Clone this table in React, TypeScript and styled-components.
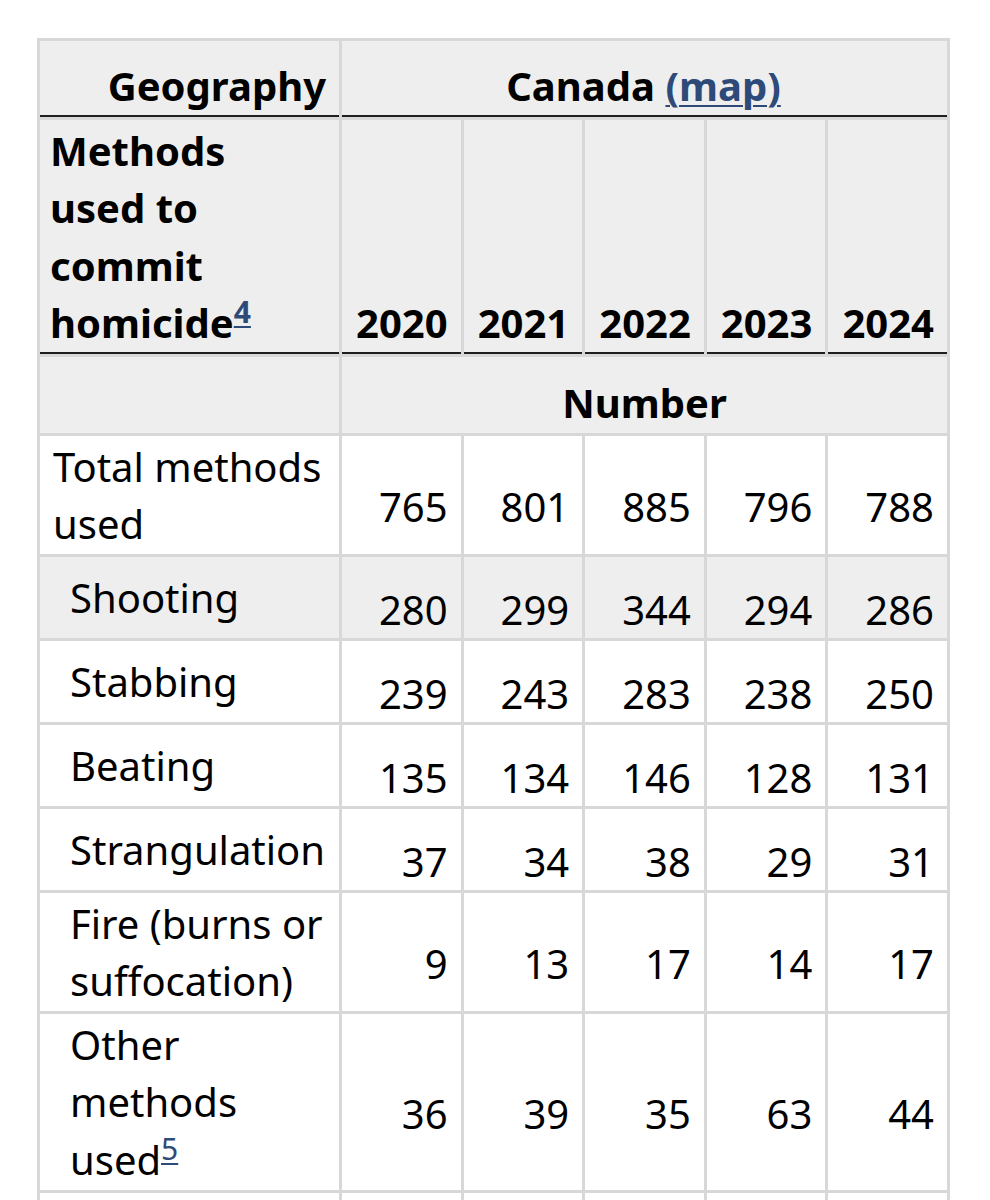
import React from "react";
import styled, { createGlobalStyle } from "styled-components";

const GlobalStyle = createGlobalStyle`
  html, body {
    margin: 0;
    padding: 0;
    background: #ffffff;
  }
  body {
    font-family: "Noto Sans", "Open Sans", sans-serif;
    color: #000000;
  }
`;

const Page = styled.div`
  padding: 38px 0 0 37px;
`;

const Table = styled.table`
  width: 913px;
  table-layout: fixed;
  border-collapse: separate;
  border-spacing: 3px;
  background: #d8d8d8;
  font-size: 40px;
  line-height: 57.5px;
`;

interface HeadCellProps {
  align?: string;
  padTop?: string;
}

const HeadCell = styled.th<HeadCellProps>`
  background: #eeeeee;
  font-weight: 700;
  text-align: ${({ align }) => align || "right"};
  vertical-align: bottom;
  padding: ${({ padTop }) => padTop || "2px"} 13px 0 11px;
  border-bottom: 2px solid #1e1e1e;
  white-space: nowrap;
`;

const StubHead = styled(HeadCell)`
  white-space: normal;
  padding-left: 10px;
`;

const UnitCell = styled.th`
  background: #eeeeee;
  font-weight: 700;
  text-align: center;
  vertical-align: bottom;
  padding: 17px 13px 2px;
`;

const EmptyHead = styled.td`
  background: #eeeeee;
`;

interface RowProps {
  shaded?: boolean;
}

interface LabelProps extends RowProps {
  indent?: boolean;
}

const Label = styled.th<LabelProps>`
  background: ${({ shaded }) => (shaded ? "#eeeeee" : "#ffffff")};
  font-weight: 400;
  text-align: left;
  vertical-align: middle;
  padding: 1.5px 8px 1.5px ${({ indent }) => (indent ? "30px" : "13px")};
`;

const Value = styled.td<RowProps>`
  background: ${({ shaded }) => (shaded ? "#eeeeee" : "#ffffff")};
  text-align: right;
  vertical-align: middle;
  padding: 23.5px 13px 0 8px;
  white-space: nowrap;
`;

const Link = styled.a`
  color: #2d4a78;
  text-decoration: underline;
  text-decoration-thickness: 2px;
  text-underline-offset: 4px;
`;

const Note = styled.sup`
  font-size: 30px;
  line-height: 0;
  vertical-align: 15px;
  font-weight: inherit;

  a {
    color: #2d4a78;
    text-decoration: underline;
    text-decoration-thickness: 2px;
    text-underline-offset: 3px;
  }
`;

const years = ["2020", "2021", "2022", "2023", "2024"];

interface MethodRow {
  label: React.ReactNode;
  values: number[];
  indent?: boolean;
  shaded?: boolean;
}

const rows: MethodRow[] = [
  { label: "Total methods used", values: [765, 801, 885, 796, 788] },
  { label: "Shooting", values: [280, 299, 344, 294, 286], indent: true, shaded: true },
  { label: "Stabbing", values: [239, 243, 283, 238, 250], indent: true },
  { label: "Beating", values: [135, 134, 146, 128, 131], indent: true },
  { label: "Strangulation", values: [37, 34, 38, 29, 31], indent: true },
  { label: "Fire (burns or suffocation)", values: [9, 13, 17, 14, 17], indent: true },
  {
    label: (
      <>
        Other methods used
        <Note>
          <a href="#note5">5</a>
        </Note>
      </>
    ),
    values: [36, 39, 35, 63, 44],
    indent: true,
  },
];

export default function App() {
  return (
    <>
      <GlobalStyle />
      <Page>
        <Table>
          <colgroup>
            <col style={{ width: "299px" }} />
            {years.map((y) => (
              <col key={y} />
            ))}
          </colgroup>
          <thead>
            <tr>
              <HeadCell padTop="16px">Geography</HeadCell>
              <HeadCell colSpan={5} align="center" padTop="16px">
                Canada <Link href="#map">(map)</Link>
              </HeadCell>
            </tr>
            <tr>
              <StubHead align="left">
                Methods used to commit homicide
                <Note>
                  <a href="#note4">4</a>
                </Note>
              </StubHead>
              {years.map((y) => (
                <HeadCell key={y}>{y}</HeadCell>
              ))}
            </tr>
            <tr>
              <EmptyHead />
              <UnitCell colSpan={5}>Number</UnitCell>
            </tr>
          </thead>
          <tbody>
            {rows.map((row, i) => (
              <tr key={i}>
                <Label indent={row.indent} shaded={row.shaded}>
                  {row.label}
                </Label>
                {row.values.map((v, j) => (
                  <Value key={j} shaded={row.shaded}>
                    {v}
                  </Value>
                ))}
              </tr>
            ))}
            <tr>
              <Label indent>&nbsp;</Label>
              {years.map((y) => (
                <Value key={y}>&nbsp;</Value>
              ))}
            </tr>
          </tbody>
        </Table>
      </Page>
    </>
  );
}
